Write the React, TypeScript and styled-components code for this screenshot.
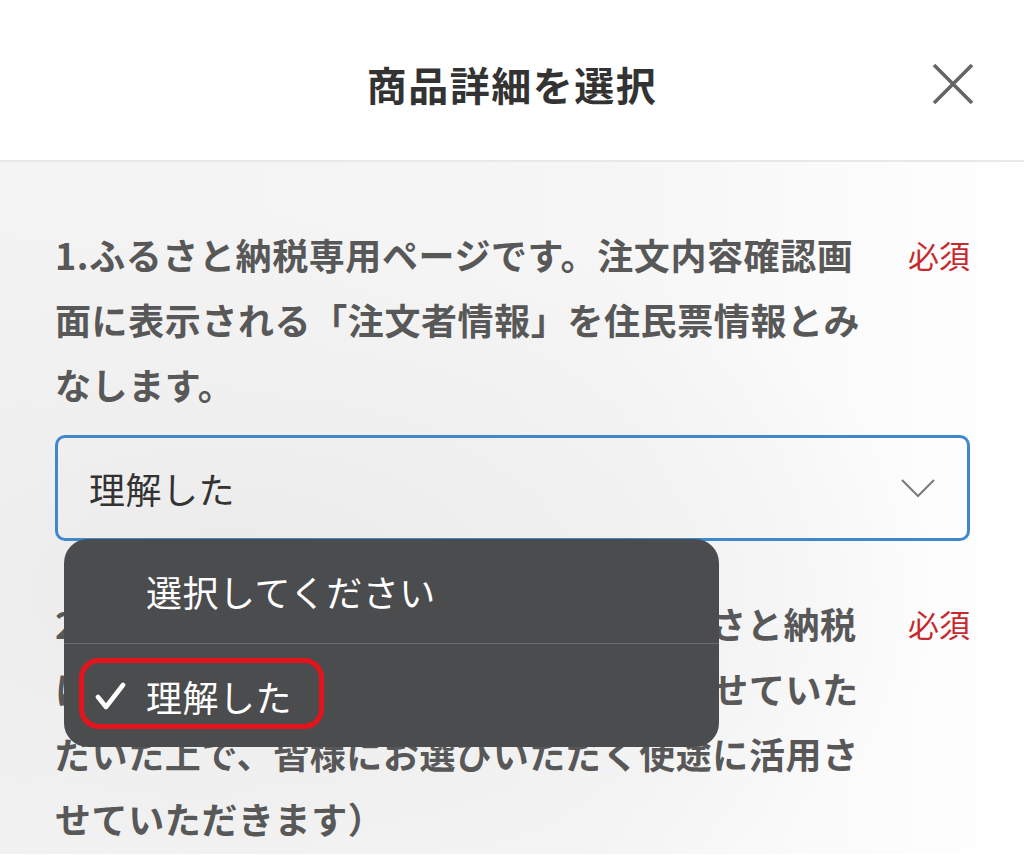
import React from "react";
import styled, { createGlobalStyle } from "styled-components";

const Global = createGlobalStyle`
  html, body { margin: 0; padding: 0; background: #ffffff; }
  body { font-family: "Noto Sans CJK JP", "Noto Sans", sans-serif; }
  * { box-sizing: border-box; }
`;

const Screen = styled.div`
  width: 1024px;
  height: 866px;
  overflow: hidden;
  background: #ffffff;
  display: flex;
  flex-direction: column;
`;

const Header = styled.header`
  height: 162px;
  flex: none;
  display: grid;
  grid-template-columns: 1fr auto 1fr;
  align-items: center;
  border-bottom: 2px solid #e8e8e8;
  padding-top: 8px;
`;

const Title = styled.h1`
  grid-column: 2;
  margin: 0;
  font-size: 40px;
  font-weight: 700;
  color: #333333;
  letter-spacing: 1.5px;
`;

const CloseButton = styled.button`
  grid-column: 3;
  justify-self: end;
  margin-right: 50px;
  margin-top: 0;
  width: 42px;
  height: 42px;
  padding: 0;
  border: 0;
  background: transparent;
  display: flex;
  align-items: center;
  justify-content: center;
`;

const Body = styled.main`
  flex: 1;
  padding: 60px 54px 0 55px;
  background:
    radial-gradient(ellipse 70% 55% at 22% 62%, #eaeaea 0%, #efefef 40%, rgba(255,255,255,0) 100%),
    linear-gradient(to right, #f3f3f3 0%, #f6f6f6 60%, #ffffff 100%);
  border-bottom: 12px solid #ffffff;
`;

const Item = styled.section<{ $gap?: number }>`
  display: flex;
  justify-content: space-between;
  align-items: flex-start;
  margin-top: ${(p) => p.$gap ?? 0}px;
`;

const Question = styled.p`
  margin: 0;
  font-size: 36px;
  line-height: 65px;
  font-weight: 700;
  color: #585858;
  letter-spacing: 0.6px;
  white-space: nowrap;
`;

const Line = styled.span`
  display: block;
`;

const Required = styled.span`
  font-size: 31px;
  line-height: 65px;
  color: #c62a2f;
  font-weight: 400;
  white-space: nowrap;
`;

const SelectWrap = styled.div`
  position: relative;
  margin-top: 18px;
`;

const SelectBox = styled.div`
  height: 106px;
  border: 3px solid #3f88cc;
  border-radius: 10px;
  display: flex;
  align-items: center;
  justify-content: space-between;
  padding: 0 32px 0 31px;
  font-size: 36px;
  color: #333333;
  letter-spacing: 0.5px;
`;

const Popup = styled.div`
  position: absolute;
  top: calc(100% - 2px);
  left: 9px;
  width: 655px;
  background: #4b4c4d;
  border-radius: 24px;
  overflow: hidden;
  z-index: 2;
  display: flex;
  flex-direction: column;
`;

const Option = styled.div<{ $divider?: boolean }>`
  position: relative;
  height: ${(p) => (p.$divider ? 105 : 103)}px;
  display: flex;
  align-items: center;
  padding-left: 30px;
  border-bottom: ${(p) => (p.$divider ? "1px solid #6d6e6f" : "none")};
  color: #ffffff;
  font-size: 36px;
  letter-spacing: 0.5px;
`;

const CheckSlot = styled.span`
  width: 52px;
  flex: none;
  display: flex;
  align-items: center;
`;

const Highlight = styled.span`
  position: absolute;
  left: 15px;
  top: 14px;
  width: 245px;
  height: 71px;
  border: 5px solid #e4141c;
  border-radius: 20px;
  pointer-events: none;
`;

export default function App() {
  return (
    <>
      <Global />
      <Screen>
        <Header>
          <Title>商品詳細を選択</Title>
          <CloseButton aria-label="閉じる">
            <svg width="42" height="42" viewBox="0 0 42 42">
              <path d="M2 2 L40 40 M40 2 L2 40" stroke="#666666" strokeWidth="3.6" strokeLinecap="butt" />
            </svg>
          </CloseButton>
        </Header>
        <Body>
          <Item>
            <Question>
              <Line>1.ふるさと納税専用ページです。注文内容確認画</Line>
              <Line>面に表示される「注文者情報」を住民票情報とみ</Line>
              <Line>なします。</Line>
            </Question>
            <Required>必須</Required>
          </Item>
          <SelectWrap>
            <SelectBox>
              <span>理解した</span>
              <svg width="34" height="20" viewBox="0 0 34 20">
                <path d="M1 2 L17 18 L33 2" fill="none" stroke="#7a7a7a" strokeWidth="2" />
              </svg>
            </SelectBox>
            <Popup>
              <Option $divider>
                <CheckSlot />
                <span>選択してください</span>
              </Option>
              <Option>
                <CheckSlot>
                  <svg width="32" height="28" viewBox="0 0 32 28">
                    <path d="M4 15 L12 25 L29 3" fill="none" stroke="#ffffff" strokeWidth="4.6" strokeLinecap="round" strokeLinejoin="round" />
                  </svg>
                </CheckSlot>
                <span>理解した</span>
                <Highlight />
              </Option>
            </Popup>
          </SelectWrap>
          <Item $gap={50}>
            <Question>
              <Line>2.寄附金の使途について（当市へのふるさと納税</Line>
              <Line>にご回答いただいた内容等を、参考にさせていた</Line>
              <Line>だいた上で、皆様にお選びいただく使途に活用さ</Line>
              <Line>せていただきます）</Line>
            </Question>
            <Required>必須</Required>
          </Item>
        </Body>
      </Screen>
    </>
  );
}
